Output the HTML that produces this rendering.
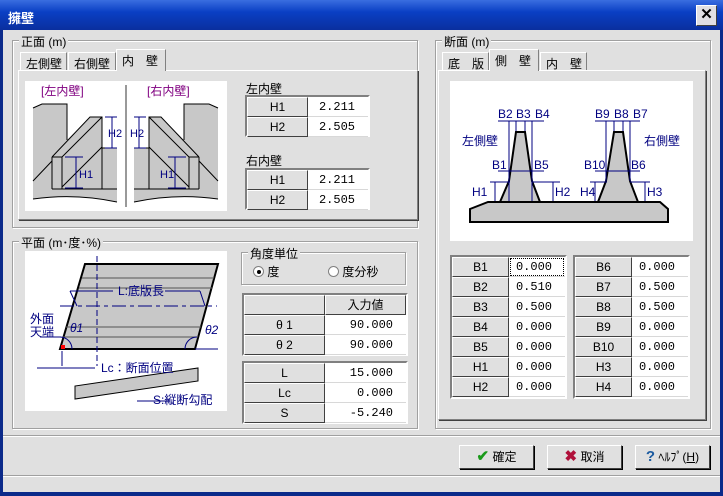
<!DOCTYPE html>
<html><head><meta charset="utf-8"><style>
*{box-sizing:border-box;margin:0;padding:0}
body{width:723px;height:496px;overflow:hidden;background:#0a246a;font-family:"Liberation Sans","Noto Sans CJK JP",sans-serif;font-size:12px;color:#000}
.win{position:absolute;left:0;top:0;width:723px;height:496px;background:#0b2a8a;}
.title{position:absolute;left:0;top:0;width:723px;height:30px;background:linear-gradient(#3a6ee0,#0a3fc4 40%,#0a2f9e);color:#fff;font-weight:bold;font-size:13px;padding:8px 0 0 8px}
.close{position:absolute;left:696px;top:5px;width:21px;height:21px;background:#e0dfe3;border:1px solid #fff;border-right-color:#404040;border-bottom-color:#404040;font-size:15px;text-align:center;line-height:18px;font-weight:bold}
.body{position:absolute;left:3px;top:30px;width:717px;height:462px;background:#e0e0e0}
.a{position:absolute;white-space:nowrap}
.grp{position:absolute;border:1px solid #a0a0a0;box-shadow:1px 1px 0 #fff inset,1px 1px 0 #fff}
.gl{position:absolute;background:#e0e0e0;padding:0 2px;top:-8px;left:6px;font-size:12px;white-space:nowrap}
.panel{position:absolute;border:1px solid #fff;border-right-color:#808080;border-bottom-color:#808080;box-shadow:1px 1px 0 #404040}
.tab{position:absolute;height:18px;border:1px solid #fff;border-bottom:none;border-right-color:#808080;background:#e0e0e0;font-size:12px;padding:2px 0 0 5px;white-space:nowrap;overflow:hidden}
.tab.on{height:22px;z-index:2}
.white{position:absolute;background:#fff}
.tbl{position:absolute;border:2px solid #808080;border-right-color:#fff;border-bottom-color:#fff;background:#fff}
.l{position:absolute;height:20px;background:#e0e0e0;border:1px solid #fff;border-right-color:#404040;border-bottom-color:#404040;text-align:center;line-height:18px;font-size:12px;white-space:nowrap}
.v{position:absolute;height:20px;background:#fff;border-bottom:1px solid #d8d8d8;text-align:right;padding-right:13px;line-height:20px;font-family:"Liberation Mono",monospace;font-size:12px}
.btn{position:absolute;top:415px;width:75px;height:24px;background:#e0e0e0;border:1px solid #fff;border-right-color:#404040;border-bottom-color:#404040;box-shadow:-1px -1px 0 #e0e0e0,1px 1px 0 #000;text-align:center;line-height:22px;font-size:12px;white-space:nowrap}
</style></head><body>
<div class="win">
<div class="title">擁壁</div>
<div class="close">✕</div>
<div class="body">

<div class="grp" style="left:9px;top:10px;width:406px;height:188px"><span class="gl">正面 (m)</span></div>
<div class="tab" style="left:17px;top:22px;width:47px">左側壁</div>
<div class="tab" style="left:65px;top:22px;width:48px">右側壁</div>
<div class="tab on" style="left:113px;top:19px;width:50px">内　壁</div>
<div class="panel" style="left:15px;top:40px;width:400px;height:150px"></div>
<div class="white" style="left:22px;top:51px;width:202px;height:130px">
<svg width="202" height="130" viewBox="0 0 202 130">
<g>
<path d="M8 27 L17 23 L42 23 L42 59 L65 36 L77 36 L77 67 L92 67 L92 121 Q50 112 8 118 Z" fill="#c8c8c8" stroke="none"/>
<g stroke="#000" fill="none">
<path d="M8 27 L17 23 L42 23 L42 59"/>
<path d="M27 76 L65 36 L77 36 L77 108"/>
<path d="M77 67 L92 67"/>
<path d="M27 76 L27 108 M37 76 L37 108 M27 76 L37 76 L77 36"/>
<path d="M27 108 L92 108"/>
<path d="M8 100 L27 80 M37 106 L77 66"/>
<path d="M8 118 Q50 112 92 121"/>
</g>
<g stroke="#000080" fill="none"><path d="M80 36 H92 M80 67 H92 M87 36 V67 M40 76 H58 M40 107 H58 M51 76 V107"/></g>
</g>
<g transform="translate(201,0) scale(-1,1)">
<path d="M8 27 L17 23 L42 23 L42 59 L65 36 L77 36 L77 67 L92 67 L92 121 Q50 112 8 118 Z" fill="#c8c8c8" stroke="none"/>
<g stroke="#000" fill="none">
<path d="M8 27 L17 23 L42 23 L42 59"/>
<path d="M27 76 L65 36 L77 36 L77 108"/>
<path d="M77 67 L92 67"/>
<path d="M27 76 L27 108 M37 76 L37 108 M27 76 L37 76 L77 36"/>
<path d="M27 108 L92 108"/>
<path d="M8 100 L27 80 M37 106 L77 66"/>
<path d="M8 118 Q50 112 92 121"/>
</g>
<g stroke="#000080" fill="none"><path d="M80 36 H92 M80 67 H92 M87 36 V67 M40 76 H58 M40 107 H58 M51 76 V107"/></g>
</g>
<rect x="100" y="4" width="2" height="122" fill="#999"/>
<text x="16" y="14" fill="#800080" font-size="12">[左内壁]</text>
<text x="122" y="14" fill="#800080" font-size="12">[右内壁]</text>
<g fill="#000080" font-size="11"><text x="83" y="56">H2</text><text x="54" y="97">H1</text><text x="105" y="56">H2</text><text x="135" y="97">H1</text></g>
</svg></div>
<div class="a" style="left:243px;top:50px">左内壁</div>
<div class="tbl" style="left:242px;top:65px;width:125px;height:42px">
<div class="l" style="left:0;top:0;width:61px">H1</div><div class="v" style="left:61px;top:0;width:60px">2.211</div>
<div class="l" style="left:0;top:20px;width:61px">H2</div><div class="v" style="left:61px;top:20px;width:60px">2.505</div></div>
<div class="a" style="left:243px;top:122px">右内壁</div>
<div class="tbl" style="left:242px;top:138px;width:125px;height:42px">
<div class="l" style="left:0;top:0;width:61px">H1</div><div class="v" style="left:61px;top:0;width:60px">2.211</div>
<div class="l" style="left:0;top:20px;width:61px">H2</div><div class="v" style="left:61px;top:20px;width:60px">2.505</div></div>

<div class="grp" style="left:9px;top:211px;width:406px;height:188px"><span class="gl">平面 (m･度･%)</span></div>
<div class="white" style="left:22px;top:221px;width:202px;height:160px">
<svg width="202" height="160" viewBox="0 0 202 160">
<path d="M60 13 L193 13 L170 98 L35 98Z" fill="#c8c8c8" stroke="#000" stroke-width="2"/>
<g stroke="#555"><path d="M57 27 H189 M54 37 H187 M41 76 H176 M38 86 H173"/></g>
<g stroke="#000080" fill="none"><path d="M72 5 V115" stroke-dasharray="6,3"/><path d="M35 55 H192" stroke-dasharray="14,4,4,4"/><path d="M15 86 H36"/><path d="M37 100 V115 M12 117 H70"/><path d="M170 98 H193"/><path d="M112 150 L145 150"/><path d="M45 40 L88 40 M140 40 L175 40"/><path d="M45 40 L52 55 M175 40 L180 55"/><path d="M35 86 A12 12 0 0 1 47 98 M172 86 A12 12 0 0 0 160 98"/></g>
<path d="M50 148 L50 135 L173 117 L173 130Z" fill="#c8c8c8" stroke="#000"/>
<rect x="36" y="94" width="4" height="4" fill="#f00"/>
<g fill="#000080" font-size="12"><text x="93" y="44">L:底版長</text><text x="5" y="72">外面</text><text x="5" y="85">天端</text><text x="45" y="81" font-style="italic">θ1</text><text x="180" y="83" font-style="italic">θ2</text><text x="76" y="121">Lc：断面位置</text><text x="128" y="153">S:縦断勾配</text></g>
</svg></div>
<div class="grp" style="left:238px;top:222px;width:165px;height:33px;border-color:#a0a0a0"><span class="gl">角度単位</span></div>
<div class="a" style="left:250px;top:233px"><span style="display:inline-block;width:11px;height:11px;border-radius:50%;background:#fff;border:1px solid #808080;vertical-align:-1px;position:relative"><span style="position:absolute;left:3px;top:3px;width:4px;height:4px;border-radius:50%;background:#000"></span></span> 度</div>
<div class="a" style="left:325px;top:233px"><span style="display:inline-block;width:11px;height:11px;border-radius:50%;background:#fff;border:1px solid #808080;vertical-align:-1px"></span> 度分秒</div>
<div class="tbl" style="left:239px;top:263px;width:166px;height:63px">
<div class="l" style="left:0;top:0;width:81px"></div><div class="l" style="left:81px;top:0;width:81px">入力値</div>
<div class="l" style="left:0;top:20px;width:81px">θ 1</div><div class="v" style="left:81px;top:20px;width:81px">90.000</div>
<div class="l" style="left:0;top:40px;width:81px">θ 2</div><div class="v" style="left:81px;top:40px;width:81px">90.000</div></div>
<div class="tbl" style="left:239px;top:331px;width:166px;height:63px">
<div class="l" style="left:0;top:0;width:81px">L</div><div class="v" style="left:81px;top:0;width:81px">15.000</div>
<div class="l" style="left:0;top:20px;width:81px">Lc</div><div class="v" style="left:81px;top:20px;width:81px">0.000</div>
<div class="l" style="left:0;top:40px;width:81px">S</div><div class="v" style="left:81px;top:40px;width:81px">-5.240</div></div>

<div class="grp" style="left:432px;top:10px;width:276px;height:389px"><span class="gl">断面 (m)</span></div>
<div class="tab" style="left:439px;top:22px;width:47px">底　版</div>
<div class="tab on" style="left:486px;top:19px;width:50px">側　壁</div>
<div class="tab" style="left:537px;top:22px;width:47px">内　壁</div>
<div class="panel" style="left:435px;top:40px;width:268px;height:350px"></div>
<div class="white" style="left:447px;top:51px;width:243px;height:160px">
<svg width="243" height="160" viewBox="0 0 243 160">
<path d="M20 128 L20 141 L218 141 L218 128 L210 121 L38 121Z" fill="#c8c8c8" stroke="#000" stroke-width="2"/>
<path d="M50 121 L59 100 L66 51 L75 51 L82 100 L90 121Z" fill="#c8c8c8" stroke="#000" stroke-width="2"/>
<path d="M148 121 L156 100 L164 51 L173 51 L180 100 L188 121Z" fill="#c8c8c8" stroke="#000" stroke-width="2"/>
<g stroke="#000080" fill="none"><path d="M59 85 V120 M82 85 V120 M66 40 V50 M75 40 V50 M59 40 V100 M82 40 V100 M48 40 H94 M48 90 H94 M40 101 H60 M82 101 H110 M45 101 V120 M103 101 V120 M156 40 V100 M164 40 V50 M173 40 V50 M180 40 V100 M145 40 H190 M145 90 H190 M140 101 H157 M180 101 H200 M145 101 V120 M195 101 V120"/></g>
<g fill="#000080" font-size="12"><text x="48" y="37">B2</text><text x="66" y="37">B3</text><text x="85" y="37">B4</text><text x="145" y="37">B9</text><text x="164" y="37">B8</text><text x="183" y="37">B7</text><text x="12" y="64">左側壁</text><text x="194" y="64">右側壁</text><text x="42" y="88">B1</text><text x="84" y="88">B5</text><text x="134" y="88">B10</text><text x="181" y="88">B6</text><text x="22" y="115">H1</text><text x="105" y="115">H2</text><text x="130" y="115">H4</text><text x="197" y="115">H3</text></g>
</svg></div>
<div class="tbl" style="left:447px;top:225px;width:117px;height:144px">
<div class="l" style="left:0;top:0;width:57px">B1</div><div class="v" style="left:57px;top:0;width:56px;outline:1px dotted #000;outline-offset:-2px">0.000</div>
<div class="l" style="left:0;top:20px;width:57px">B2</div><div class="v" style="left:57px;top:20px;width:56px">0.510</div>
<div class="l" style="left:0;top:40px;width:57px">B3</div><div class="v" style="left:57px;top:40px;width:56px">0.500</div>
<div class="l" style="left:0;top:60px;width:57px">B4</div><div class="v" style="left:57px;top:60px;width:56px">0.000</div>
<div class="l" style="left:0;top:80px;width:57px">B5</div><div class="v" style="left:57px;top:80px;width:56px">0.000</div>
<div class="l" style="left:0;top:100px;width:57px">H1</div><div class="v" style="left:57px;top:100px;width:56px">0.000</div>
<div class="l" style="left:0;top:120px;width:57px">H2</div><div class="v" style="left:57px;top:120px;width:56px">0.000</div></div>
<div class="tbl" style="left:570px;top:225px;width:117px;height:144px">
<div class="l" style="left:0;top:0;width:57px">B6</div><div class="v" style="left:57px;top:0;width:56px">0.000</div>
<div class="l" style="left:0;top:20px;width:57px">B7</div><div class="v" style="left:57px;top:20px;width:56px">0.500</div>
<div class="l" style="left:0;top:40px;width:57px">B8</div><div class="v" style="left:57px;top:40px;width:56px">0.500</div>
<div class="l" style="left:0;top:60px;width:57px">B9</div><div class="v" style="left:57px;top:60px;width:56px">0.000</div>
<div class="l" style="left:0;top:80px;width:57px">B10</div><div class="v" style="left:57px;top:80px;width:56px">0.000</div>
<div class="l" style="left:0;top:100px;width:57px">H3</div><div class="v" style="left:57px;top:100px;width:56px">0.000</div>
<div class="l" style="left:0;top:120px;width:57px">H4</div><div class="v" style="left:57px;top:120px;width:56px">0.000</div></div>

<div class="a" style="left:0;top:405px;width:717px;height:2px;border-top:1px solid #a0a0a0;border-bottom:1px solid #fff"></div>
<div class="btn" style="left:456px"><span style="color:#1a9a1a;font-weight:bold;font-size:15px">✔</span> 確定</div>
<div class="btn" style="left:544px"><span style="color:#b0103a;font-weight:bold;font-size:15px">✖</span> 取消</div>
<div class="btn" style="left:632px"><span style="color:#1a5aa0;font-weight:bold;font-size:15px">?</span> ﾍﾙﾌﾟ(<u>H</u>)</div>
<div class="a" style="left:0;top:445px;width:717px;height:2px;border-top:1px solid #a0a0a0;border-bottom:1px solid #fff"></div>
</div></div>
</body></html>
